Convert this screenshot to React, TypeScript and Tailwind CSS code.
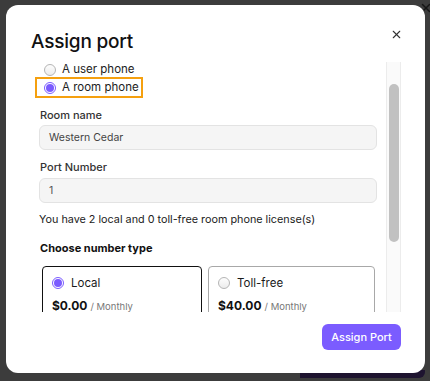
import { X } from "lucide-react";

function Radio({ checked }: { checked?: boolean }) {
  return checked ? (
    <span className="flex h-[12px] w-[12px] shrink-0 items-center justify-center rounded-full border border-[#7b5cff] bg-white">
      <span className="h-[8px] w-[8px] rounded-full bg-[#7b5cff]" />
    </span>
  ) : (
    <span className="h-[12px] w-[12px] shrink-0 rounded-full border border-[#b5b5b5] bg-gradient-to-b from-[#fdfdfd] to-[#ececec]" />
  );
}

function PlanCard({ name, price, checked, width }: { name: string; price: string; checked?: boolean; width: string }) {
  return (
    <div
      className={
        "h-[70px] shrink-0 rounded-[4px] bg-white px-[9px] pt-[9px] " +
        width +
        (checked ? " border-[1.5px] border-[#111]" : " border border-[#a8a8a8]")
      }
    >
      <div className="flex items-center gap-[7px]">
        <Radio checked={checked} />
        <span className="text-[11.5px] leading-[14px] text-[#1a1a1a]">{name}</span>
      </div>
      <div className="mt-[8px] flex items-baseline gap-[3px]">
        <span className="text-[12px] font-bold leading-[16px] text-[#111]">{price}</span>
        <span className="text-[9.5px] text-[#777]">/ Monthly</span>
      </div>
    </div>
  );
}

export default function App() {
  return (
    <div className="relative h-[381px] w-[430px] overflow-hidden bg-[#3c3c3c] pl-[6px] pt-[5px] font-['Inter',sans-serif]">
      {/* bits of the page behind the overlay */}
      <X className="absolute right-[-3px] top-[1px] h-[14px] w-[14px] text-[#151515]" strokeWidth={2.5} />
      <div className="absolute left-[300px] top-[370px] h-[8px] w-[125px] rounded-br-[6px] bg-[#1e1430]" />

      <div className="relative flex h-[368px] w-[419px] flex-col rounded-[12px] bg-white">
        <div className="relative h-[57px] shrink-0 pl-[25px] pt-[24px]">
          <h1 className="text-[19px] font-medium leading-[26px] tracking-[-0.2px] text-[#111]">Assign port</h1>
          <X className="absolute right-[22px] top-[23px] h-[13px] w-[13px] text-[#333]" strokeWidth={2} />
        </div>

        <div className="ml-[25px] mr-[24px] flex h-[250px] shrink-0">
          <div className="flex-1 overflow-hidden pr-[9px]">
            <div className="ml-[4px] flex h-[15px] items-center gap-[6px] pl-[9px]">
              <Radio />
              <span className="text-[11.5px] text-[#222]">A user phone</span>
            </div>
            <div className="ml-[4px] flex h-[21px] w-[108px] items-center gap-[6px] border-2 border-[#f5a00f] pl-[7px]">
              <Radio checked />
              <span className="whitespace-nowrap text-[11.5px] text-[#222]">A room phone</span>
            </div>

            <div className="ml-[9px] mt-[9px] text-[11px] font-medium leading-[16px] text-[#333]">Room name</div>
            <div className="ml-[8px] mt-[2px] flex h-[25px] items-center rounded-[6px] border border-[#e3e3e3] bg-[#f5f5f5] pl-[9px] text-[10.5px] text-[#444]">
              Western Cedar
            </div>

            <div className="ml-[9px] mt-[9px] text-[11px] font-medium leading-[16px] text-[#333]">Port Number</div>
            <div className="ml-[8px] mt-[3px] flex h-[25px] items-center rounded-[6px] border border-[#e3e3e3] bg-[#f5f5f5] pl-[9px] text-[10.5px] text-[#555]">
              1
            </div>

            <div className="ml-[8px] mt-[9px] text-[10.8px] leading-[16px] text-[#222]">
              You have 2 local and 0 toll-free room phone license(s)
            </div>

            <div className="ml-[9px] mt-[12px] text-[11px] font-bold leading-[16px] text-[#111]">Choose number type</div>

            <div className="ml-[11px] mt-[10px] flex gap-[6px]">
              <PlanCard name="Local" price="$0.00" checked width="w-[160px]" />
              <PlanCard name="Toll-free" price="$40.00" width="w-[167px]" />
            </div>
          </div>

          <div className="w-[15px] shrink-0 border-x border-[#ececec] bg-[#fafafa] pt-[22px]">
            <div className="mx-auto h-[158px] w-[10px] rounded-full bg-[#c1c1c1]" />
          </div>
        </div>

        <div className="flex justify-end pr-[24px] pt-[12px]">
          <button className="h-[26px] w-[79px] rounded-[6px] bg-[#7b5cff] text-[11px] font-medium text-white">
            Assign Port
          </button>
        </div>
      </div>
    </div>
  );
}
